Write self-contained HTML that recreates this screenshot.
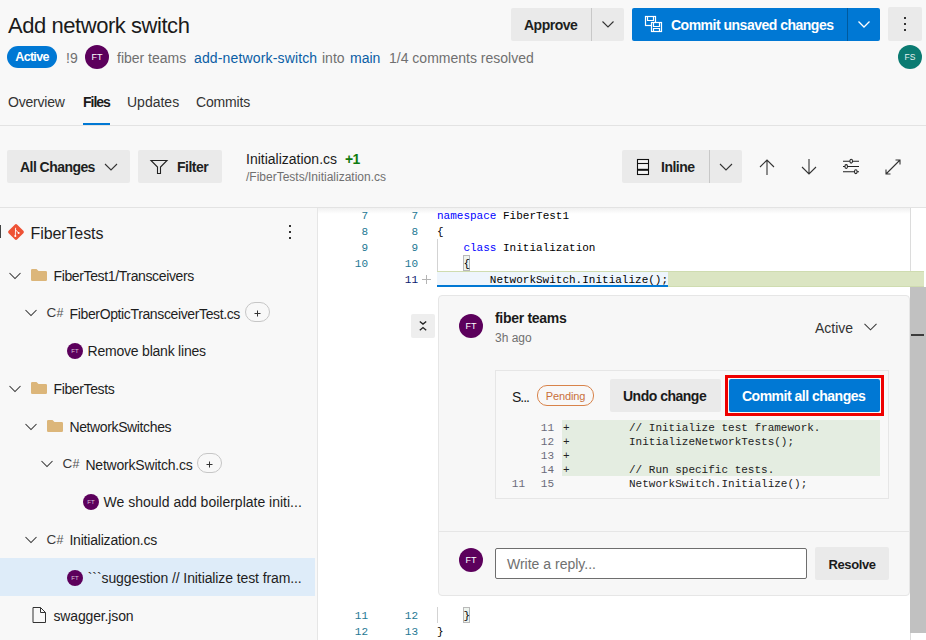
<!DOCTYPE html>
<html><head><meta charset="utf-8">
<style>
*{box-sizing:border-box;margin:0;padding:0}
html,body{width:926px;height:640px;overflow:hidden;background:#f8f8f8;font-family:"Liberation Sans",sans-serif;color:#201f1e}
.a{position:absolute;white-space:nowrap}
.t14{font-size:14px;line-height:20px}
.g{color:#707070}
.lk{color:#0b5ea5}
.sb{font-weight:bold;letter-spacing:-0.5px}
.btn{position:absolute;background:#eaeaea;border-radius:2px}
.av{position:absolute;border-radius:50%;background:#5c005c;color:#fff;text-align:center;font-weight:bold}
pre.a{white-space:pre}
.mono{font-family:"Liberation Mono",monospace;font-size:11px}
.ln{color:#237893;text-align:right}
</style></head><body>

<!-- ===== Header ===== -->
<div class="a" style="left:8px;top:11.9px;font-size:22px;line-height:28px;color:#1b1b1b;letter-spacing:-0.45px">Add network switch</div>

<div class="a" style="left:7px;top:46px;width:50px;height:22px;border-radius:11px;background:#0078d4;color:#fff;font-size:12.5px;line-height:23px;text-align:center;font-weight:bold;letter-spacing:-0.7px">Active</div>
<div class="a t14 g" style="left:66px;top:48px">!9</div>
<div class="av" style="left:85px;top:45px;width:24px;height:24px;font-size:9px;line-height:24px;font-weight:normal">FT</div>
<div class="a t14 g" style="left:117px;top:48px">fiber teams</div>
<div class="a t14 lk" style="left:194px;top:48px;letter-spacing:0.15px">add-network-switch</div>
<div class="a t14 g" style="left:322px;top:48px">into</div>
<div class="a t14 lk" style="left:350px;top:48px">main</div>
<div class="a t14 g" style="left:389px;top:48px">1/4 comments resolved</div>

<!-- Approve -->
<div class="btn" style="left:511px;top:8px;width:113px;height:33px"></div>
<div class="a" style="left:591px;top:8px;width:1px;height:33px;background:#c8c8c8"></div>
<div class="a t14 sb" style="left:524px;top:15px">Approve</div>
<svg class="a" style="left:601px;top:17px" width="14" height="14" viewBox="0 0 14 14"><path d="M1.5 4.5 L7 10 L12.5 4.5" fill="none" stroke="#333" stroke-width="1.1"/></svg>

<!-- Commit unsaved -->
<div class="a" style="left:632px;top:8px;width:248px;height:33px;background:#0078d4;border-radius:2px"></div>
<div class="a" style="left:847px;top:8px;width:1px;height:33px;background:#005a9e"></div>
<svg class="a" style="left:640px;top:10px" width="30" height="30" viewBox="0 0 30 30" fill="none" stroke="#fff" stroke-width="1.2"><rect x="5.5" y="6.5" width="10" height="9"/><path d="M7.5 6.5V10.5H13.5V6.5"/><rect x="11.5" y="12.5" width="10" height="9" fill="#0078d4"/><path d="M13.5 12.5V16.5H19.5V12.5M13.5 21.5V18.5H19.5V21.5"/></svg>
<div class="a t14 sb" style="left:671px;top:15px;color:#fff">Commit unsaved changes</div>
<svg class="a" style="left:857px;top:17px" width="14" height="14" viewBox="0 0 14 14"><path d="M1.5 4.5 L7 10 L12.5 4.5" fill="none" stroke="#fff" stroke-width="1.3"/></svg>

<!-- More -->
<div class="btn" style="left:888px;top:7px;width:34px;height:34px"></div>
<div class="a" style="left:904px;top:17px;width:2px;height:2px;background:#333"></div>
<div class="a" style="left:904px;top:23px;width:2px;height:2px;background:#333"></div>
<div class="a" style="left:904px;top:29px;width:2px;height:2px;background:#333"></div>

<div class="av" style="left:898px;top:45px;width:24px;height:24px;background:#0b7b72;font-size:8.5px;line-height:24px;font-weight:normal;color:#e6f2f0">FS</div>

<!-- Tabs -->
<div class="a t14" style="left:8px;top:92px;color:#333;letter-spacing:-0.2px">Overview</div>
<div class="a t14 sb" style="left:83px;top:92px;color:#1b1b1b;letter-spacing:-1px">Files</div>
<div class="a t14" style="left:127px;top:92px;color:#333">Updates</div>
<div class="a t14" style="left:196px;top:92px;color:#333;letter-spacing:-0.15px">Commits</div>
<div class="a" style="left:83px;top:123px;width:27px;height:2px;background:#0078d4"></div>
<div class="a" style="left:0;top:125px;width:926px;height:1px;background:#e3e3e3"></div>

<!-- ===== Toolbar ===== -->
<div class="btn" style="left:7px;top:150px;width:123px;height:33px"></div>
<div class="a t14 sb" style="left:20px;top:157px;letter-spacing:-0.55px">All Changes</div>
<svg class="a" style="left:104px;top:160px" width="14" height="14" viewBox="0 0 14 14"><path d="M1 4 L7 10 L13 4" fill="none" stroke="#333" stroke-width="1.1"/></svg>

<div class="btn" style="left:138px;top:150px;width:84px;height:33px"></div>
<svg class="a" style="left:145px;top:155px" width="30" height="25" viewBox="0 0 30 25"><path d="M6 5.5 H22 L15.5 12 V18.5 H12.5 V12 Z" fill="none" stroke="#222" stroke-width="1.1" stroke-linejoin="miter"/></svg>
<div class="a t14 sb" style="left:177px;top:157px">Filter</div>

<div class="a t14" style="left:246px;top:149px;color:#1b1b1b">Initialization.cs</div>
<div class="a t14" style="left:345px;top:149px;color:#107c10;font-weight:bold;letter-spacing:-0.8px">+1</div>
<div class="a g" style="left:246px;top:169px;font-size:12px;line-height:16px">/FiberTests/Initialization.cs</div>

<div class="btn" style="left:622px;top:150px;width:120px;height:33px"></div>
<div class="a" style="left:709px;top:150px;width:1px;height:33px;background:#c8c8c8"></div>
<svg class="a" style="left:630px;top:155px" width="25" height="25" viewBox="0 0 25 25" fill="none" stroke="#111" stroke-width="1.1"><rect x="7.5" y="4.5" width="11" height="15" fill="#f6f6f6"/><path d="M7.5 8.5h11"/><path d="M7.5 14.8h11" stroke-width="2"/></svg>
<div class="a t14 sb" style="left:661px;top:157px">Inline</div>
<svg class="a" style="left:719px;top:160px" width="14" height="14" viewBox="0 0 14 14"><path d="M1 4 L7 10 L13 4" fill="none" stroke="#333" stroke-width="1.1"/></svg>

<svg class="a" style="left:758px;top:158px" width="18" height="18" viewBox="0 0 18 18" fill="none" stroke="#333" stroke-width="1.1"><path d="M9 2v15M2 9l7-7 7 7"/></svg>
<svg class="a" style="left:800px;top:158px" width="18" height="18" viewBox="0 0 18 18" fill="none" stroke="#333" stroke-width="1.1"><path d="M9 1v15M2 9l7 7 7-7"/></svg>
<svg class="a" style="left:842px;top:156px" width="18" height="20" viewBox="0 0 18 20" fill="none" stroke="#222" stroke-width="1.05"><path d="M1 5.2h16M1 10.5h16M1 15.7h16"/><ellipse cx="9.2" cy="5.2" rx="1.3" ry="1.9" fill="#f8f8f8"/><ellipse cx="4.2" cy="10.5" rx="1.3" ry="1.9" fill="#f8f8f8"/><ellipse cx="13.8" cy="15.7" rx="1.3" ry="1.9" fill="#f8f8f8"/></svg>
<svg class="a" style="left:884px;top:158px" width="18" height="18" viewBox="0 0 18 18" fill="none" stroke="#333" stroke-width="1.1"><path d="M2 16L16 2M11.5 2h4.5v4.5M2 11.5v4.5h4.5"/></svg>

<div class="a" style="left:0;top:207px;width:926px;height:1px;background:#e3e3e3"></div>

<!-- ===== Left tree ===== -->
<!--TREE START-->
<div class="a" style="left:0;top:208px;width:317px;height:432px;background:#f8f8f8"></div>
<div class="a" style="left:317px;top:208px;width:1px;height:432px;background:#e6e6e6"></div>
<div class="a" style="left:0;top:225px;width:1px;height:13px;background:#444"></div>
<svg class="a" style="left:7px;top:223px" width="18" height="18" viewBox="0 0 18 18"><rect x="2.9" y="2.9" width="12.2" height="12.2" rx="1.8" transform="rotate(45 9 9)" fill="#ee5235"/><path d="M8.6 4.8 L8.3 13.2 M8.5 6.8 L11.6 10" stroke="#fff" stroke-width="0.9" fill="none"/><circle cx="8.3" cy="13" r="1" fill="#fff"/><circle cx="11.6" cy="10" r="1" fill="#fff"/></svg>
<div class="a" style="left:30.5px;top:222.5px;font-size:16px;line-height:22px;color:#1e1e1e;letter-spacing:-0.1px">FiberTests</div>
<div class="a" style="left:289px;top:225px;width:2px;height:2px;background:#333"></div>
<div class="a" style="left:289px;top:231px;width:2px;height:2px;background:#333"></div>
<div class="a" style="left:289px;top:237px;width:2px;height:2px;background:#333"></div>
<div class="a" style="left:0;top:558px;width:315px;height:37.75px;background:#deecf9"></div>
<div class="a" style="left:0;top:256.0px;width:315px;height:37.75px"><svg class="a" style="left:9px;top:15.5px" width="12" height="8" viewBox="0 0 12 8"><path d="M0.5 1 L6 6.5 L11.5 1" fill="none" stroke="#333" stroke-width="1.05"/></svg><svg class="a" style="left:31px;top:13.2px" width="16" height="12" viewBox="0 0 16 12"><path d="M0 1.2 Q0 0 1.2 0 H5.5 L7.5 2 H14.8 Q16 2 16 3.2 V10.8 Q16 12 14.8 12 H1.2 Q0 12 0 10.8 Z" fill="#dcb67a"/></svg><div class="a" style="left:53.5px;top:9.8px;font-size:14px;line-height:20px;color:#1e1e1e;letter-spacing:-0.37px">FiberTest1/Transceivers</div></div>
<div class="a" style="left:0;top:293.75px;width:315px;height:37.75px"><svg class="a" style="left:25px;top:15.5px" width="12" height="8" viewBox="0 0 12 8"><path d="M0.5 1 L6 6.5 L11.5 1" fill="none" stroke="#333" stroke-width="1.05"/></svg><div class="a" style="left:46.5px;top:9.5px;font-size:13.5px;line-height:20px;color:#3a3a3a;letter-spacing:0.2px">C<span style="color:#555;font-size:12.5px">#</span></div><div class="a" style="left:69.6px;top:9.8px;font-size:14px;line-height:20px;color:#1e1e1e;letter-spacing:-0.37px">FiberOpticTransceiverTest.cs</div><div class="a" style="left:245px;top:8.25px;width:25px;height:20px;border:1px solid #c6c6c6;border-radius:10px"></div><svg class="a" style="left:254px;top:16.5px" width="7" height="7" viewBox="0 0 7 7" stroke="#333" stroke-width="1"><path d="M0.5 3.5h6M3.5 0.5v6"/></svg></div>
<div class="a" style="left:0;top:331.5px;width:315px;height:37.75px"><div class="av" style="left:67px;top:11.5px;width:16px;height:16px;font-size:6px;line-height:16px;font-weight:normal;color:#d8c0d8">FT</div><div class="a" style="left:87.6px;top:9.8px;font-size:14px;line-height:20px;color:#1e1e1e;letter-spacing:-0.22px">Remove blank lines</div></div>
<div class="a" style="left:0;top:369.25px;width:315px;height:37.75px"><svg class="a" style="left:9px;top:15.5px" width="12" height="8" viewBox="0 0 12 8"><path d="M0.5 1 L6 6.5 L11.5 1" fill="none" stroke="#333" stroke-width="1.05"/></svg><svg class="a" style="left:31px;top:13.2px" width="16" height="12" viewBox="0 0 16 12"><path d="M0 1.2 Q0 0 1.2 0 H5.5 L7.5 2 H14.8 Q16 2 16 3.2 V10.8 Q16 12 14.8 12 H1.2 Q0 12 0 10.8 Z" fill="#dcb67a"/></svg><div class="a" style="left:53.5px;top:9.8px;font-size:14px;line-height:20px;color:#1e1e1e;letter-spacing:-0.37px">FiberTests</div></div>
<div class="a" style="left:0;top:407.0px;width:315px;height:37.75px"><svg class="a" style="left:25px;top:15.5px" width="12" height="8" viewBox="0 0 12 8"><path d="M0.5 1 L6 6.5 L11.5 1" fill="none" stroke="#333" stroke-width="1.05"/></svg><svg class="a" style="left:47px;top:13.2px" width="16" height="12" viewBox="0 0 16 12"><path d="M0 1.2 Q0 0 1.2 0 H5.5 L7.5 2 H14.8 Q16 2 16 3.2 V10.8 Q16 12 14.8 12 H1.2 Q0 12 0 10.8 Z" fill="#dcb67a"/></svg><div class="a" style="left:69.4px;top:9.8px;font-size:14px;line-height:20px;color:#1e1e1e;letter-spacing:-0.37px">NetworkSwitches</div></div>
<div class="a" style="left:0;top:444.75px;width:315px;height:37.75px"><svg class="a" style="left:41px;top:15.5px" width="12" height="8" viewBox="0 0 12 8"><path d="M0.5 1 L6 6.5 L11.5 1" fill="none" stroke="#333" stroke-width="1.05"/></svg><div class="a" style="left:62.5px;top:9.5px;font-size:13.5px;line-height:20px;color:#3a3a3a;letter-spacing:0.2px">C<span style="color:#555;font-size:12.5px">#</span></div><div class="a" style="left:85.4px;top:9.8px;font-size:14px;line-height:20px;color:#1e1e1e;letter-spacing:-0.2px">NetworkSwitch.cs</div><div class="a" style="left:197px;top:8.25px;width:25px;height:20px;border:1px solid #c6c6c6;border-radius:10px"></div><svg class="a" style="left:206px;top:16.5px" width="7" height="7" viewBox="0 0 7 7" stroke="#333" stroke-width="1"><path d="M0.5 3.5h6M3.5 0.5v6"/></svg></div>
<div class="a" style="left:0;top:482.5px;width:315px;height:37.75px"><div class="av" style="left:83px;top:11.5px;width:16px;height:16px;font-size:6px;line-height:16px;font-weight:normal;color:#d8c0d8">FT</div><div class="a" style="left:103.6px;top:9.8px;font-size:14px;line-height:20px;color:#1e1e1e;letter-spacing:0px">We should add boilerplate initi...</div></div>
<div class="a" style="left:0;top:520.25px;width:315px;height:37.75px"><svg class="a" style="left:25px;top:15.5px" width="12" height="8" viewBox="0 0 12 8"><path d="M0.5 1 L6 6.5 L11.5 1" fill="none" stroke="#333" stroke-width="1.05"/></svg><div class="a" style="left:46.5px;top:9.5px;font-size:13.5px;line-height:20px;color:#3a3a3a;letter-spacing:0.2px">C<span style="color:#555;font-size:12.5px">#</span></div><div class="a" style="left:69.4px;top:9.8px;font-size:14px;line-height:20px;color:#1e1e1e;letter-spacing:-0.2px">Initialization.cs</div></div>
<div class="a" style="left:0;top:558.0px;width:315px;height:37.75px"><div class="av" style="left:67px;top:11.5px;width:16px;height:16px;font-size:6px;line-height:16px;font-weight:normal;color:#d8c0d8">FT</div><div class="a" style="left:87.8px;top:9.8px;font-size:14px;line-height:20px;color:#1e1e1e;letter-spacing:-0.1px">```suggestion // Initialize test fram...</div></div>
<div class="a" style="left:0;top:595.75px;width:315px;height:37.75px"><svg class="a" style="left:31.5px;top:11.5px" width="14" height="16" viewBox="0 0 14 16"><path d="M1 0.5 H8.5 L13.5 5.5 V15.5 H1 Z M8.5 0.5 V5.5 H13.5" fill="none" stroke="#333" stroke-width="1"/></svg><div class="a" style="left:53.5px;top:9.8px;font-size:14px;line-height:20px;color:#1e1e1e;letter-spacing:-0.15px">swagger.json</div></div>
<!--TREE END-->
<!-- ===== Diff ===== -->
<!-- diff area -->
<div class="a" style="left:318px;top:208px;width:608px;height:432px;background:#fff"></div>
<div class="a" style="left:318px;top:208px;width:592px;height:6px;background:linear-gradient(#f1f1f1,#fff)"></div>
<div class="a" style="left:910px;top:208px;width:1px;height:432px;background:#dcdcdc"></div>
<div class="a" style="left:910px;top:287px;width:16px;height:346px;background:#c1c1c1"></div>
<div class="a" style="left:911px;top:334px;width:13px;height:2px;background:#3c3c3c"></div>

<div class="a mono ln" style="left:330px;top:208px;width:38px;line-height:16px">7<br>8<br>9<br>10</div>
<div class="a mono ln" style="left:380px;top:208px;width:38px;line-height:16px">7<br>8<br>9<br>10<br><span style="color:#0b216f">11</span></div>
<svg class="a" style="left:421px;top:274px" width="11" height="11" viewBox="0 0 11 11" stroke="#b4b4b4" stroke-width="1"><path d="M1 5.5h9M5.5 1v9"/></svg>

<div class="a" style="left:437px;top:239px;width:1px;height:32px;background:#d3d3d3"></div>
<div class="a" style="left:437px;top:271px;width:487px;height:16px;background:#dbe5c2;border-top:1px solid #cfdcb0;border-bottom:1px solid #cfdcb0"></div>
<div class="a" style="left:437px;top:272px;width:231px;height:15px;background:#eef5fc;border-bottom:2px solid #0078d4"></div>
<div class="a" style="left:463px;top:255px;width:7px;height:16px;background:#eef4ee;border:1px solid #b9b9b9"></div>
<pre class="a mono" style="left:437px;top:208px;line-height:16px;color:#000"><span style="color:#0000ff">namespace</span> FiberTest1
{
    <span style="color:#0000ff">class</span> Initialization
    {
        NetworkSwitch.Initialize();</pre>

<!-- collapse button -->
<div class="a" style="left:411px;top:314px;width:24px;height:24px;background:#eeeeee;border-radius:2px"></div>
<svg class="a" style="left:417px;top:319px" width="12" height="14" viewBox="0 0 12 14" fill="none" stroke="#222" stroke-width="1.3"><path d="M2.8 2.4 L6 5.1 L9.2 2.4 M2.8 11.3 L6 8.6 L9.2 11.3"/></svg>

<!-- comment card -->
<div class="a" style="left:438px;top:295px;width:472px;height:301px;background:#f7f7f7;border:1px solid #e6e6e6;border-radius:4px"></div>
<div class="av" style="left:459px;top:314px;width:24px;height:24px;font-size:9px;line-height:24px;font-weight:normal">FT</div>
<div class="a" style="left:495px;top:308px;font-size:14px;line-height:20px;font-weight:bold;color:#1b1b1b;letter-spacing:-0.3px">fiber teams</div>
<div class="a g" style="left:495px;top:329px;font-size:12px;line-height:18px">3h ago</div>
<div class="a" style="left:815px;top:318px;font-size:14px;line-height:20px;color:#333">Active</div>
<svg class="a" style="left:864px;top:323px" width="13" height="8" viewBox="0 0 13 8"><path d="M0.5 0.8 L6.5 6.8 L12.5 0.8" fill="none" stroke="#3a3a3a" stroke-width="1.05"/></svg>

<!-- suggestion box -->
<div class="a" style="left:495px;top:370px;width:394px;height:129px;background:#f8f8f8;border:1px solid #e6e6e6"></div>
<div class="a" style="left:512px;top:386.5px;font-size:14px;line-height:20px;color:#1b1b1b;letter-spacing:-1px">S...</div>
<div class="a" style="left:537px;top:385px;width:57px;height:21px;border:1px solid #d8834a;border-radius:10px;color:#c9703a;font-size:11px;line-height:21px;text-align:center;letter-spacing:-0.1px">Pending</div>
<div class="btn" style="left:610px;top:379px;width:111px;height:33px"></div>
<div class="a t14 sb" style="left:623px;top:386px;color:#1b1b1b">Undo change</div>
<div class="a" style="left:725px;top:375px;width:159px;height:41px;border:3px solid #e00"></div>
<div class="a" style="left:729px;top:379px;width:151px;height:33px;background:#0078d4;border-radius:2px"></div>
<div class="a t14 sb" style="left:742px;top:386px;color:#fff">Commit all changes</div>

<div class="a" style="left:562px;top:420px;width:318px;height:56px;background:#e4ede1"></div>
<div class="a mono" style="left:505px;top:421px;width:20px;line-height:14px;color:#6b6b78;text-align:right"><br><br><br><br>11</div>
<div class="a mono" style="left:530px;top:421px;width:24px;line-height:14px;color:#6b6b78;text-align:right">11<br>12<br>13<br>14<br>15</div>
<pre class="a mono" style="left:563px;top:421px;line-height:14px;color:#222">+         // Initialize test framework.
+         InitializeNetworkTests();
+
+         // Run specific tests.
          NetworkSwitch.Initialize();</pre>

<!-- reply -->
<div class="a" style="left:439px;top:531px;width:470px;height:1px;background:#e6e6e6"></div>
<div class="av" style="left:459px;top:548px;width:24px;height:24px;font-size:9px;line-height:24px;font-weight:normal">FT</div>
<div class="a" style="left:495px;top:548px;width:312px;height:31px;background:#fff;border:1px solid #6e6e6e;border-radius:2px"></div>
<div class="a g" style="left:507px;top:554px;font-size:14px;line-height:20px">Write a reply...</div>
<div class="btn" style="left:815px;top:547px;width:74px;height:33px"></div>
<div class="a" style="left:828.5px;top:554.5px;font-size:13px;line-height:20px;font-weight:bold;color:#1b1b1b;letter-spacing:-0.4px">Resolve</div>

<!-- bottom lines -->
<div class="a mono ln" style="left:330px;top:608px;width:38px;line-height:16px">11<br>12</div>
<div class="a mono ln" style="left:380px;top:608px;width:38px;line-height:16px">12<br>13</div>
<div class="a" style="left:437px;top:607px;width:1px;height:16px;background:#d3d3d3"></div>
<div class="a" style="left:463px;top:607px;width:7px;height:16px;background:#eef4ee;border:1px solid #b9b9b9"></div>
<pre class="a mono" style="left:437px;top:608px;line-height:16px;color:#000">    }
}</pre>


</body></html>
